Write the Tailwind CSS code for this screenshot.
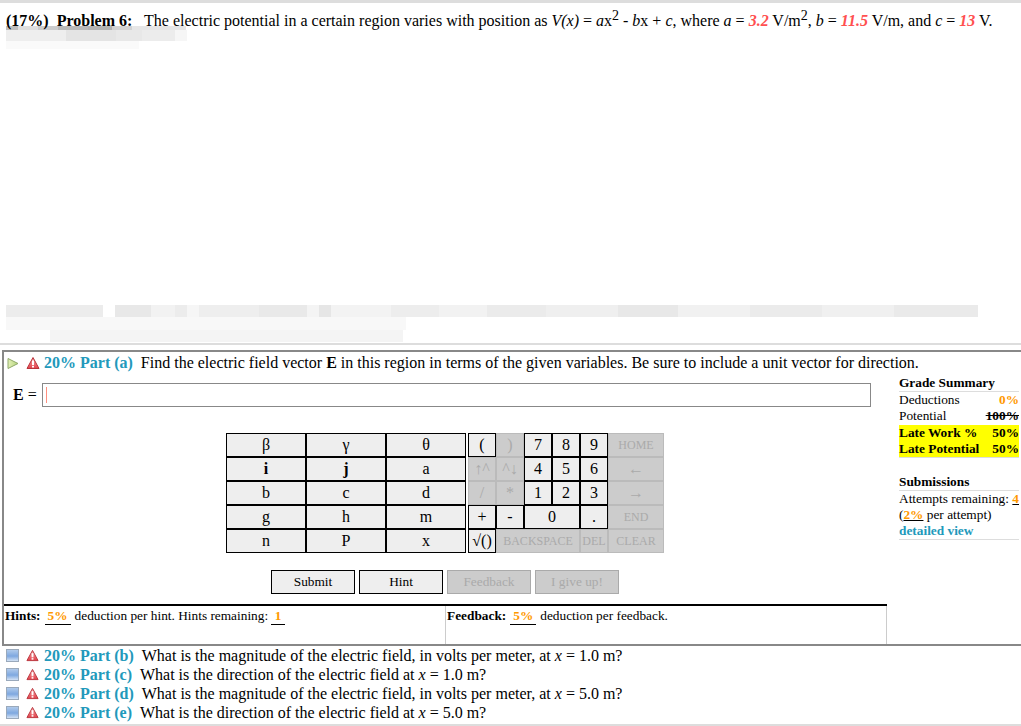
<!DOCTYPE html>
<html lang="en">
<head>
<meta charset="UTF-8">
<title>Problem 6</title>
<script src="https://cdn.jsdelivr.net/npm/@tailwindcss/browser@4"></script>
</head>
<body class="bg-white text-black font-['Liberation_Serif',serif] overflow-hidden h-[726px] relative">
  <!-- shared icon gradients -->
  <svg class="absolute w-0 h-0">
    <defs>
      <linearGradient id="warn" x1="0" y1="0" x2="0" y2="1"><stop offset="0" stop-color="#f5a9a9"/><stop offset="1" stop-color="#e2404a"/></linearGradient>
      <linearGradient id="box" x1="0" y1="0" x2="0" y2="1"><stop offset="0" stop-color="#b4cdec"/><stop offset="0.55" stop-color="#7ea8e0"/><stop offset="1" stop-color="#dbe7f6"/></linearGradient>
      <linearGradient id="play" x1="0" y1="0" x2="1" y2="0"><stop offset="0" stop-color="#e4f0b8"/><stop offset="1" stop-color="#b4d47c"/></linearGradient>
    </defs>
  </svg>

  <!-- redacted text smudges -->
  <div class="absolute left-[6px] top-[26px] flex h-[4px] w-[180px] opacity-80">
    <div class="w-[12px] bg-[#b0b0b0]"></div><div class="w-[20px] bg-[#d8d8d8]"></div><div class="w-[20px] bg-[#c0c0c0]"></div><div class="w-[30px] bg-[#a8a8a8]"></div><div class="w-[24px] bg-[#a0a0a0]"></div><div class="w-[20px] bg-[#c8c8c8]"></div><div class="w-[54px] bg-[#e0e0e0]"></div>
  </div>
  <div class="absolute left-[6px] top-[30px] flex h-[11px] w-[181px]">
    <div class="w-[60px] bg-[#eeeeee]"></div><div class="w-[50px] bg-[#e4e4e4]"></div><div class="w-[26px] bg-[#e8e8e8]"></div><div class="w-[33px] bg-[#ececec]"></div><div class="w-[12px] bg-[#f6f6f6]"></div>
  </div>
  <div class="absolute left-[6px] top-[41px] w-[133px] h-[8px] bg-[#fafafa]"></div>

  <div class="absolute left-[6px] top-[305px] flex h-[12px] w-[972px]">
    <div class="w-[97px] bg-[#ececec]"></div><div class="w-[12px]"></div><div class="w-[36px] bg-[#e8e8e8]"></div><div class="w-[24px] bg-[#f2f2f2]"></div><div class="w-[12px] bg-[#ececec]"></div><div class="w-[12px] bg-[#f6f6f6]"></div><div class="w-[60px] bg-[#eeeeee]"></div><div class="w-[48px] bg-[#e9e9e9]"></div><div class="w-[12px] bg-[#f4f4f4]"></div><div class="w-[12px] bg-[#e6e6e6]"></div><div class="w-[60px] bg-[#f3f3f3]"></div><div class="w-[48px] bg-[#ededed]"></div><div class="w-[48px] bg-[#f2f2f2]"></div><div class="w-[60px] bg-[#ebebeb]"></div><div class="w-[72px] bg-[#efefef]"></div><div class="w-[60px] bg-[#e8e8e8]"></div><div class="w-[72px] bg-[#f1f1f1]"></div><div class="w-[72px] bg-[#ebebeb]"></div><div class="w-[72px] bg-[#f0f0f0]"></div><div class="w-[84px] bg-[#eaeaea]"></div>
  </div>
  <div class="absolute left-[6px] top-[317px] w-[400px] h-[13px] bg-[#f8f8f8]"></div>
  <div class="absolute left-[50px] top-[330px] w-[353px] h-[12px] bg-[#f4f4f4]"></div>

  <div class="relative border-t-[3px] border-[#dddddd] h-[343px] pl-[6px] pt-[8px] text-[16px] leading-[20px] whitespace-nowrap">
    <b>(17%)&nbsp; Problem 6:</b>&nbsp;&nbsp; The electric potential in a certain region varies with position as <i>V(x)</i> = <i>a</i>x<sup class="text-[14px] leading-none top-[-6px]">2</sup> - <i>b</i>x + <i>c</i>, where <i>a</i> = <i class="text-[#ff5050] font-bold">3.2</i> V/m<sup class="text-[14px] leading-none top-[-6px]">2</sup>, <i>b</i> = <i class="text-[#ff5050] font-bold">11.5</i> V/m, and <i>c</i> = <i class="text-[#ff5050] font-bold">13</i> V.
  </div>
  <div class="border-t-2 border-[#dddddd] h-[7px]"></div>

  <!-- open part -->
  <section class="ml-[2px] h-[296px] border-t-2 border-l-2 border-b-2 border-[#888888]">
    <div class="flex h-[22px] items-center pl-[2px] whitespace-nowrap">
      <svg class="w-[13px] h-[13px] mr-[7px]" viewBox="0 0 13 13"><path d="M2 1.5 L12 6.5 L2 11.5 Z" fill="url(#play)" stroke="#8fa96a"/></svg>
      <svg class="w-[14px] h-[14px] mr-[4px]" viewBox="0 0 14 14"><path d="M7 1.5 L13 12.5 H1 Z" fill="url(#warn)" stroke="#b8323a" stroke-linejoin="round"/><rect x="6" y="4.5" width="2" height="4.5" fill="#fff"/><rect x="6" y="9.8" width="2" height="1.7" fill="#fff"/></svg>
      <b class="text-[16px] text-[#2299bb]">20% Part (a)</b>
      <span class="text-[16px] ml-[8px]">Find the electric field vector <b>E</b> in this region in terms of the given variables. Be sure to include a unit vector for direction.</span>
    </div>

    <div class="flex">
      <div class="w-[895px] shrink-0">
        <div class="flex items-center h-[24px] mt-[9px]">
          <span class="w-[38px] pl-[9px] text-[16px]"><b>E</b> =</span>
          <div class="w-[829px] h-[24px] border border-[#888888] flex items-center pl-[3px]">
            <div class="w-px h-[16px] bg-[#ff9080]"></div>
          </div>
        </div>

        <!-- keypad -->
        <div class="flex mt-[26px] ml-[222px] text-[16px] leading-[22px] text-center">
          <div class="grid grid-cols-[80px_80px_80px] grid-rows-[repeat(5,24px)] w-[240px]">
            <div class="bg-[#eeeeee] border border-black">β</div><div class="bg-[#eeeeee] border border-black">γ</div><div class="bg-[#eeeeee] border border-black">θ</div>
            <div class="bg-[#eeeeee] border border-black font-bold">i</div><div class="bg-[#eeeeee] border border-black font-bold">j</div><div class="bg-[#eeeeee] border border-black">a</div>
            <div class="bg-[#eeeeee] border border-black">b</div><div class="bg-[#eeeeee] border border-black">c</div><div class="bg-[#eeeeee] border border-black">d</div>
            <div class="bg-[#eeeeee] border border-black">g</div><div class="bg-[#eeeeee] border border-black">h</div><div class="bg-[#eeeeee] border border-black">m</div>
            <div class="bg-[#eeeeee] border border-black">n</div><div class="bg-[#eeeeee] border border-black">P</div><div class="bg-[#eeeeee] border border-black">x</div>
          </div>
          <div class="grid grid-cols-[28px_28px_28px_28px_28px_56px] grid-rows-[repeat(5,24px)] ml-[2px]">
            <div class="bg-[#eeeeee] border border-black">(</div><div class="bg-[#cccccc] border border-[#bbbbbb] text-[#aaaaaa]">)</div><div class="bg-[#eeeeee] border border-black">7</div><div class="bg-[#eeeeee] border border-black">8</div><div class="bg-[#eeeeee] border border-black">9</div><div class="bg-[#cccccc] border border-[#bbbbbb] text-[#aaaaaa] text-[12px]">HOME</div>
            <div class="bg-[#cccccc] border border-[#bbbbbb] text-[#aaaaaa]">↑^</div><div class="bg-[#cccccc] border border-[#bbbbbb] text-[#aaaaaa]">^↓</div><div class="bg-[#eeeeee] border border-black">4</div><div class="bg-[#eeeeee] border border-black">5</div><div class="bg-[#eeeeee] border border-black">6</div><div class="bg-[#cccccc] border border-[#bbbbbb] text-[#aaaaaa]">←</div>
            <div class="bg-[#cccccc] border border-[#bbbbbb] text-[#aaaaaa]">/</div><div class="bg-[#cccccc] border border-[#bbbbbb] text-[#aaaaaa]">*</div><div class="bg-[#eeeeee] border border-black">1</div><div class="bg-[#eeeeee] border border-black">2</div><div class="bg-[#eeeeee] border border-black">3</div><div class="bg-[#cccccc] border border-[#bbbbbb] text-[#aaaaaa]">→</div>
            <div class="bg-[#eeeeee] border border-black">+</div><div class="bg-[#eeeeee] border border-black">-</div><div class="col-span-2 bg-[#eeeeee] border border-black">0</div><div class="bg-[#eeeeee] border border-black">.</div><div class="bg-[#cccccc] border border-[#bbbbbb] text-[#aaaaaa] text-[12px]">END</div>
            <div class="bg-[#eeeeee] border border-black">√()</div><div class="col-span-3 bg-[#cccccc] border border-[#bbbbbb] text-[#aaaaaa] text-[12px]">BACKSPACE</div><div class="bg-[#cccccc] border border-[#bbbbbb] text-[#aaaaaa] text-[12px] overflow-hidden">DEL</div><div class="bg-[#cccccc] border border-[#bbbbbb] text-[#aaaaaa] text-[12px]">CLEAR</div>
          </div>
        </div>

        <div class="flex gap-[4px] mt-[17px] ml-[267px] text-[13.33px] text-center leading-[22px]">
          <div class="w-[84px] h-[24px] bg-[#eeeeee] border border-black">Submit</div>
          <div class="w-[84px] h-[24px] bg-[#eeeeee] border border-black">Hint</div>
          <div class="w-[84px] h-[24px] bg-[#cccccc] border border-[#aaaaaa] text-[#aaaaaa]">Feedback</div>
          <div class="w-[84px] h-[24px] bg-[#cccccc] border border-[#aaaaaa] text-[#aaaaaa]">I give up!</div>
        </div>

        <div class="flex mt-[10px] w-[883px] border-t-2 border-black h-[40px] text-[13.33px] leading-[20px] whitespace-nowrap">
          <div class="w-[442px] pl-[1px] border-r border-[#cccccc]"><b>Hints:</b><b class="inline-block leading-[16px] text-center text-[#ff9900] border-b border-black ml-[4px] mr-[4px] w-[26px]">5%</b>deduction per hint. Hints remaining:<b class="inline-block leading-[16px] text-center text-[#ff9900] border-b border-black ml-[3px] w-[14px]">1</b></div>
          <div class="w-[441px] pl-[1px] border-r border-[#cccccc]"><b>Feedback:</b><b class="inline-block leading-[16px] text-center text-[#ff9900] border-b border-black ml-[4px] mr-[4px] w-[26px]">5%</b>deduction per feedback.</div>
        </div>
      </div>

      <!-- grade summary -->
      <aside class="w-[120px] mt-[1px] text-[13.33px] leading-[16px] whitespace-nowrap">
        <div class="border-b border-[#dddddd] h-[17px] font-bold">Grade Summary</div>
        <div class="flex justify-between h-[16px]"><span>Deductions</span><b class="text-[#ff9900]">0%</b></div>
        <div class="flex justify-between h-[17px]"><span>Potential</span><b class="line-through">100%</b></div>
        <div class="bg-[#ffff00] font-bold border-b border-[#dddddd]">
          <div class="flex justify-between"><span>Late Work %</span><span>50%</span></div>
          <div class="flex justify-between"><span>Late Potential</span><span>50%</span></div>
        </div>
        <div class="border-b border-[#dddddd] h-[17px] font-bold mt-[16px]">Submissions</div>
        <div class="flex justify-between"><span>Attempts remaining:</span><b class="text-[#ff9900] underline decoration-black">4</b></div>
        <div>(<b class="text-[#ff9900] underline decoration-black">2%</b> per attempt)</div>
        <div class="border-b border-[#dddddd] h-[17px] font-bold text-[#2299bb]">detailed view</div>
      </aside>
    </div>
  </section>

  <!-- closed parts -->
  <div class="ml-[6px] text-[16px] leading-[19px] whitespace-nowrap">
    <div class="flex h-[19px] items-center">
      <svg class="w-[13px] h-[13px] mr-[7px]" viewBox="0 0 13 13"><rect x="0.5" y="0.5" width="12" height="12" fill="url(#box)" stroke="#9aa9bb"/></svg>
      <svg class="w-[13px] h-[13px] mr-[5px]" viewBox="0 0 14 14"><path d="M7 1.5 L13 12.5 H1 Z" fill="url(#warn)" stroke="#b8323a" stroke-linejoin="round"/><rect x="6" y="4.5" width="2" height="4.5" fill="#fff"/><rect x="6" y="9.8" width="2" height="1.7" fill="#fff"/></svg>
      <b class="text-[#2299bb]">20% Part (b)</b><span class="ml-[8px]">What is the magnitude of the electric field, in volts per meter, at <i>x</i> = 1.0 m?</span>
    </div>
    <div class="flex h-[19px] items-center">
      <svg class="w-[13px] h-[13px] mr-[7px]" viewBox="0 0 13 13"><rect x="0.5" y="0.5" width="12" height="12" fill="url(#box)" stroke="#9aa9bb"/></svg>
      <svg class="w-[13px] h-[13px] mr-[5px]" viewBox="0 0 14 14"><path d="M7 1.5 L13 12.5 H1 Z" fill="url(#warn)" stroke="#b8323a" stroke-linejoin="round"/><rect x="6" y="4.5" width="2" height="4.5" fill="#fff"/><rect x="6" y="9.8" width="2" height="1.7" fill="#fff"/></svg>
      <b class="text-[#2299bb]">20% Part (c)</b><span class="ml-[8px]">What is the direction of the electric field at <i>x</i> = 1.0 m?</span>
    </div>
    <div class="flex h-[19px] items-center">
      <svg class="w-[13px] h-[13px] mr-[7px]" viewBox="0 0 13 13"><rect x="0.5" y="0.5" width="12" height="12" fill="url(#box)" stroke="#9aa9bb"/></svg>
      <svg class="w-[13px] h-[13px] mr-[5px]" viewBox="0 0 14 14"><path d="M7 1.5 L13 12.5 H1 Z" fill="url(#warn)" stroke="#b8323a" stroke-linejoin="round"/><rect x="6" y="4.5" width="2" height="4.5" fill="#fff"/><rect x="6" y="9.8" width="2" height="1.7" fill="#fff"/></svg>
      <b class="text-[#2299bb]">20% Part (d)</b><span class="ml-[8px]">What is the magnitude of the electric field, in volts per meter, at <i>x</i> = 5.0 m?</span>
    </div>
    <div class="flex h-[19px] items-center">
      <svg class="w-[13px] h-[13px] mr-[7px]" viewBox="0 0 13 13"><rect x="0.5" y="0.5" width="12" height="12" fill="url(#box)" stroke="#9aa9bb"/></svg>
      <svg class="w-[13px] h-[13px] mr-[5px]" viewBox="0 0 14 14"><path d="M7 1.5 L13 12.5 H1 Z" fill="url(#warn)" stroke="#b8323a" stroke-linejoin="round"/><rect x="6" y="4.5" width="2" height="4.5" fill="#fff"/><rect x="6" y="9.8" width="2" height="1.7" fill="#fff"/></svg>
      <b class="text-[#2299bb]">20% Part (e)</b><span class="ml-[8px]">What is the direction of the electric field at <i>x</i> = 5.0 m?</span>
    </div>
  </div>
  <div class="border-t-2 border-[#dddddd] absolute left-0 right-0 top-[724px]"></div>
</body>
</html>
